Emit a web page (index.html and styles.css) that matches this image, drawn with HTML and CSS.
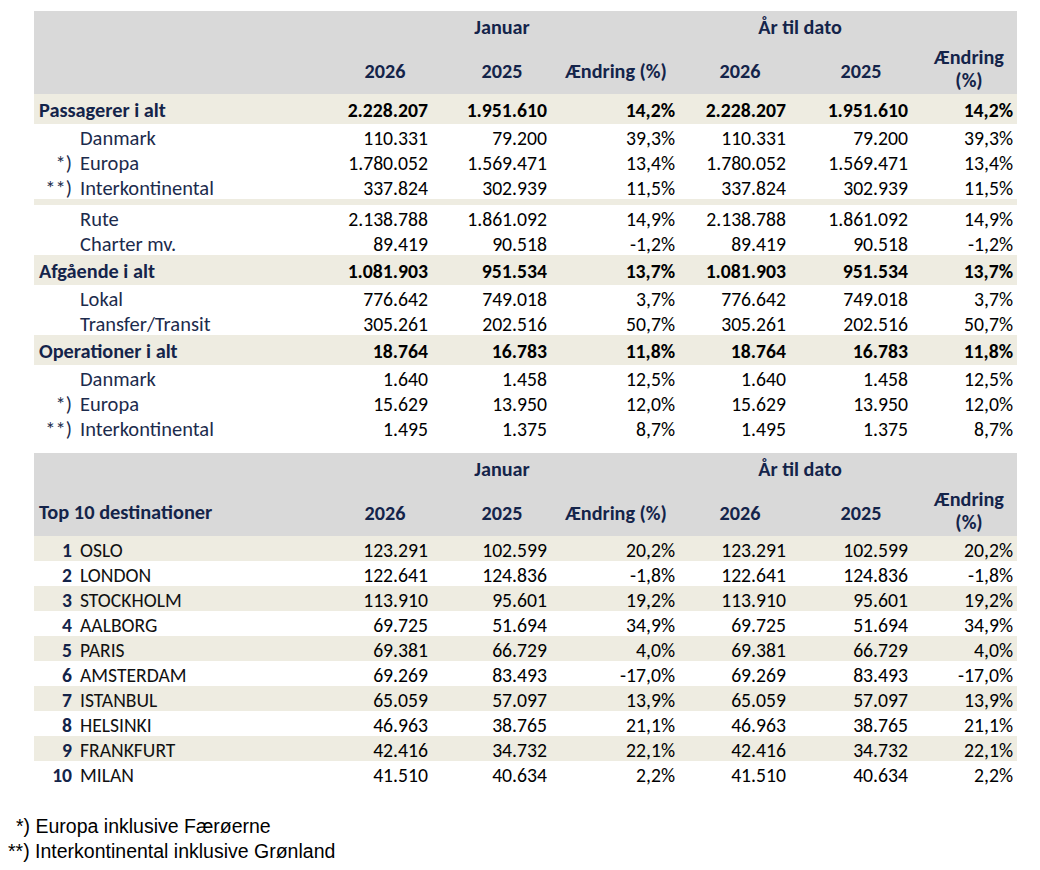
FILE: index.html
```html
<!DOCTYPE html>
<html lang="da">
<head>
<meta charset="utf-8">
<title>Trafiktal januar</title>
<link rel="stylesheet" href="styles.css">
</head>
<body>
<div class="page">
  <section class="table">
    <div class="grid head">
      <div class="h-label"></div>
      <div class="h-group h-jan">Januar</div>
      <div class="h-group h-ytd">År til dato</div>
      <div class="h-label r2"></div>
      <div class="h-col r2">2026</div>
      <div class="h-col r2">2025</div>
      <div class="h-col r2">Ændring (%)</div>
      <div class="h-col r2">2026</div>
      <div class="h-col r2">2025</div>
      <div class="h-col r2 two">Ændring<br>(%)</div>
    </div>

    <div class="grid row total"><div class="lbl">Passagerer i alt</div><div>2.228.207</div><div>1.951.610</div><div>14,2%</div><div>2.228.207</div><div>1.951.610</div><div>14,2%</div></div>
    <div class="grid row"><div class="lbl"><span class="mark"></span>Danmark</div><div>110.331</div><div>79.200</div><div>39,3%</div><div>110.331</div><div>79.200</div><div>39,3%</div></div>
    <div class="grid row"><div class="lbl"><span class="mark">*)</span>Europa</div><div>1.780.052</div><div>1.569.471</div><div>13,4%</div><div>1.780.052</div><div>1.569.471</div><div>13,4%</div></div>
    <div class="grid row"><div class="lbl"><span class="mark">**)</span>Interkontinental</div><div>337.824</div><div>302.939</div><div>11,5%</div><div>337.824</div><div>302.939</div><div>11,5%</div></div>
    <div class="sep"></div>
    <div class="grid row"><div class="lbl"><span class="mark"></span>Rute</div><div>2.138.788</div><div>1.861.092</div><div>14,9%</div><div>2.138.788</div><div>1.861.092</div><div>14,9%</div></div>
    <div class="grid row"><div class="lbl"><span class="mark"></span>Charter mv.</div><div>89.419</div><div>90.518</div><div>-1,2%</div><div>89.419</div><div>90.518</div><div>-1,2%</div></div>
    <div class="grid row total"><div class="lbl">Afgående i alt</div><div>1.081.903</div><div>951.534</div><div>13,7%</div><div>1.081.903</div><div>951.534</div><div>13,7%</div></div>
    <div class="grid row"><div class="lbl"><span class="mark"></span>Lokal</div><div>776.642</div><div>749.018</div><div>3,7%</div><div>776.642</div><div>749.018</div><div>3,7%</div></div>
    <div class="grid row"><div class="lbl"><span class="mark"></span>Transfer/Transit</div><div>305.261</div><div>202.516</div><div>50,7%</div><div>305.261</div><div>202.516</div><div>50,7%</div></div>
    <div class="grid row total"><div class="lbl">Operationer i alt</div><div>18.764</div><div>16.783</div><div>11,8%</div><div>18.764</div><div>16.783</div><div>11,8%</div></div>
    <div class="grid row"><div class="lbl"><span class="mark"></span>Danmark</div><div>1.640</div><div>1.458</div><div>12,5%</div><div>1.640</div><div>1.458</div><div>12,5%</div></div>
    <div class="grid row"><div class="lbl"><span class="mark">*)</span>Europa</div><div>15.629</div><div>13.950</div><div>12,0%</div><div>15.629</div><div>13.950</div><div>12,0%</div></div>
    <div class="grid row"><div class="lbl"><span class="mark">**)</span>Interkontinental</div><div>1.495</div><div>1.375</div><div>8,7%</div><div>1.495</div><div>1.375</div><div>8,7%</div></div>
  </section>

  <section class="table second">
    <div class="grid head">
      <div class="h-label"></div>
      <div class="h-group h-jan">Januar</div>
      <div class="h-group h-ytd">År til dato</div>
      <div class="h-label r2 title">Top 10 destinationer</div>
      <div class="h-col r2">2026</div>
      <div class="h-col r2">2025</div>
      <div class="h-col r2">Ændring (%)</div>
      <div class="h-col r2">2026</div>
      <div class="h-col r2">2025</div>
      <div class="h-col r2 two">Ændring<br>(%)</div>
    </div>

    <div class="grid row dest alt"><div class="lbl"><span class="rank">1</span>OSLO</div><div>123.291</div><div>102.599</div><div>20,2%</div><div>123.291</div><div>102.599</div><div>20,2%</div></div>
    <div class="grid row dest"><div class="lbl"><span class="rank">2</span>LONDON</div><div>122.641</div><div>124.836</div><div>-1,8%</div><div>122.641</div><div>124.836</div><div>-1,8%</div></div>
    <div class="grid row dest alt"><div class="lbl"><span class="rank">3</span>STOCKHOLM</div><div>113.910</div><div>95.601</div><div>19,2%</div><div>113.910</div><div>95.601</div><div>19,2%</div></div>
    <div class="grid row dest"><div class="lbl"><span class="rank">4</span>AALBORG</div><div>69.725</div><div>51.694</div><div>34,9%</div><div>69.725</div><div>51.694</div><div>34,9%</div></div>
    <div class="grid row dest alt"><div class="lbl"><span class="rank">5</span>PARIS</div><div>69.381</div><div>66.729</div><div>4,0%</div><div>69.381</div><div>66.729</div><div>4,0%</div></div>
    <div class="grid row dest"><div class="lbl"><span class="rank">6</span>AMSTERDAM</div><div>69.269</div><div>83.493</div><div>-17,0%</div><div>69.269</div><div>83.493</div><div>-17,0%</div></div>
    <div class="grid row dest alt"><div class="lbl"><span class="rank">7</span>ISTANBUL</div><div>65.059</div><div>57.097</div><div>13,9%</div><div>65.059</div><div>57.097</div><div>13,9%</div></div>
    <div class="grid row dest"><div class="lbl"><span class="rank">8</span>HELSINKI</div><div>46.963</div><div>38.765</div><div>21,1%</div><div>46.963</div><div>38.765</div><div>21,1%</div></div>
    <div class="grid row dest alt"><div class="lbl"><span class="rank">9</span>FRANKFURT</div><div>42.416</div><div>34.732</div><div>22,1%</div><div>42.416</div><div>34.732</div><div>22,1%</div></div>
    <div class="grid row dest"><div class="lbl"><span class="rank">10</span>MILAN</div><div>41.510</div><div>40.634</div><div>2,2%</div><div>41.510</div><div>40.634</div><div>2,2%</div></div>
  </section>

  <div class="notes">
    <p class="n1">*) Europa inklusive Færøerne</p>
    <p class="n2">**) Interkontinental inklusive Grønland</p>
  </div>
</div>
</body>
</html>
```

FILE: styles.css
```css
* { box-sizing: border-box; }

body {
  margin: 0;
  background: #ffffff;
  font-family: Carlito, Lato, "Noto Sans", sans-serif;
  color: #000;
}

.page {
  width: 1040px;
  padding: 11px 0 0 34px;
}

.table { width: 983px; }
.second { margin-top: 13px; }

.grid {
  display: grid;
  grid-template-columns: 285px 132px 102px 126px 122px 120px 96px;
}

/* header */
.head {
  background: #d9d9d9;
  height: 83px;
  grid-template-rows: 32px 51px;
  color: #14244a;
  font-weight: 700;
  font-size: 20.2px;
}
.h-group {
  display: flex;
  align-items: center;
  justify-content: center;
}
.h-jan { grid-column: 3 / 4; }
.h-ytd { grid-column: 5 / 7; }
.h-label { grid-column: 1 / 2; }
.h-label.r2 {
  grid-row: 2;
  display: flex;
  align-items: center;
  padding: 2px 0 0 5px;
}
.h-col {
  grid-row: 2;
  display: flex;
  align-items: center;
  justify-content: center;
  text-align: center;
  padding-top: 5px;
  line-height: 23px;
}
.h-col.two { padding-top: 0; }

/* body rows */
.row {
  height: 25px;
  font-size: 19.7px;
  line-height: 22px;
}
.row > div {
  text-align: right;
  white-space: nowrap;
  padding-top: 3px;
}
.row > div:nth-child(2) { padding-right: 23px; }
.row > div:nth-child(3) { padding-right: 6px; }
.row > div:nth-child(4) { padding-right: 4px; }
.row > div:nth-child(5) { padding-right: 15px; }
.row > div:nth-child(6) { padding-right: 13px; }
.row > div:nth-child(7) { padding-right: 4px; }

.row > .lbl {
  display: flex;
  text-align: left;
  color: #1c2b4c;
  font-size: 20.5px;
}
.mark {
  width: 38px;
  margin-right: 8px;
  text-align: right;
}

.total {
  background: #eeece1;
  height: 30px;
  line-height: 27px;
  font-weight: 700;
}
.total > .lbl {
  padding-left: 5px;
  color: #14244a;
}
.row.total > .lbl { font-size: 20.3px; }

.sep {
  height: 6px;
  background: #eeece1;
}

.row.dest > .lbl {
  color: #111;
  font-size: 19.6px;
}
.rank {
  width: 38px;
  margin-right: 8px;
  text-align: right;
  font-weight: 700;
  color: #14244a;
}
.alt { background: #eeece1; }

.title { font-size: 20.4px; }

/* footnotes */
.notes {
  margin: 28px 0 0 -34px;
  font-family: "Liberation Sans", Arial, sans-serif;
  font-size: 19.5px;
  color: #000;
}
.notes p {
  margin: 0;
  line-height: 25px;
  white-space: nowrap;
}
.n1 { padding-left: 16px; }
.n2 { padding-left: 8px; }
```
